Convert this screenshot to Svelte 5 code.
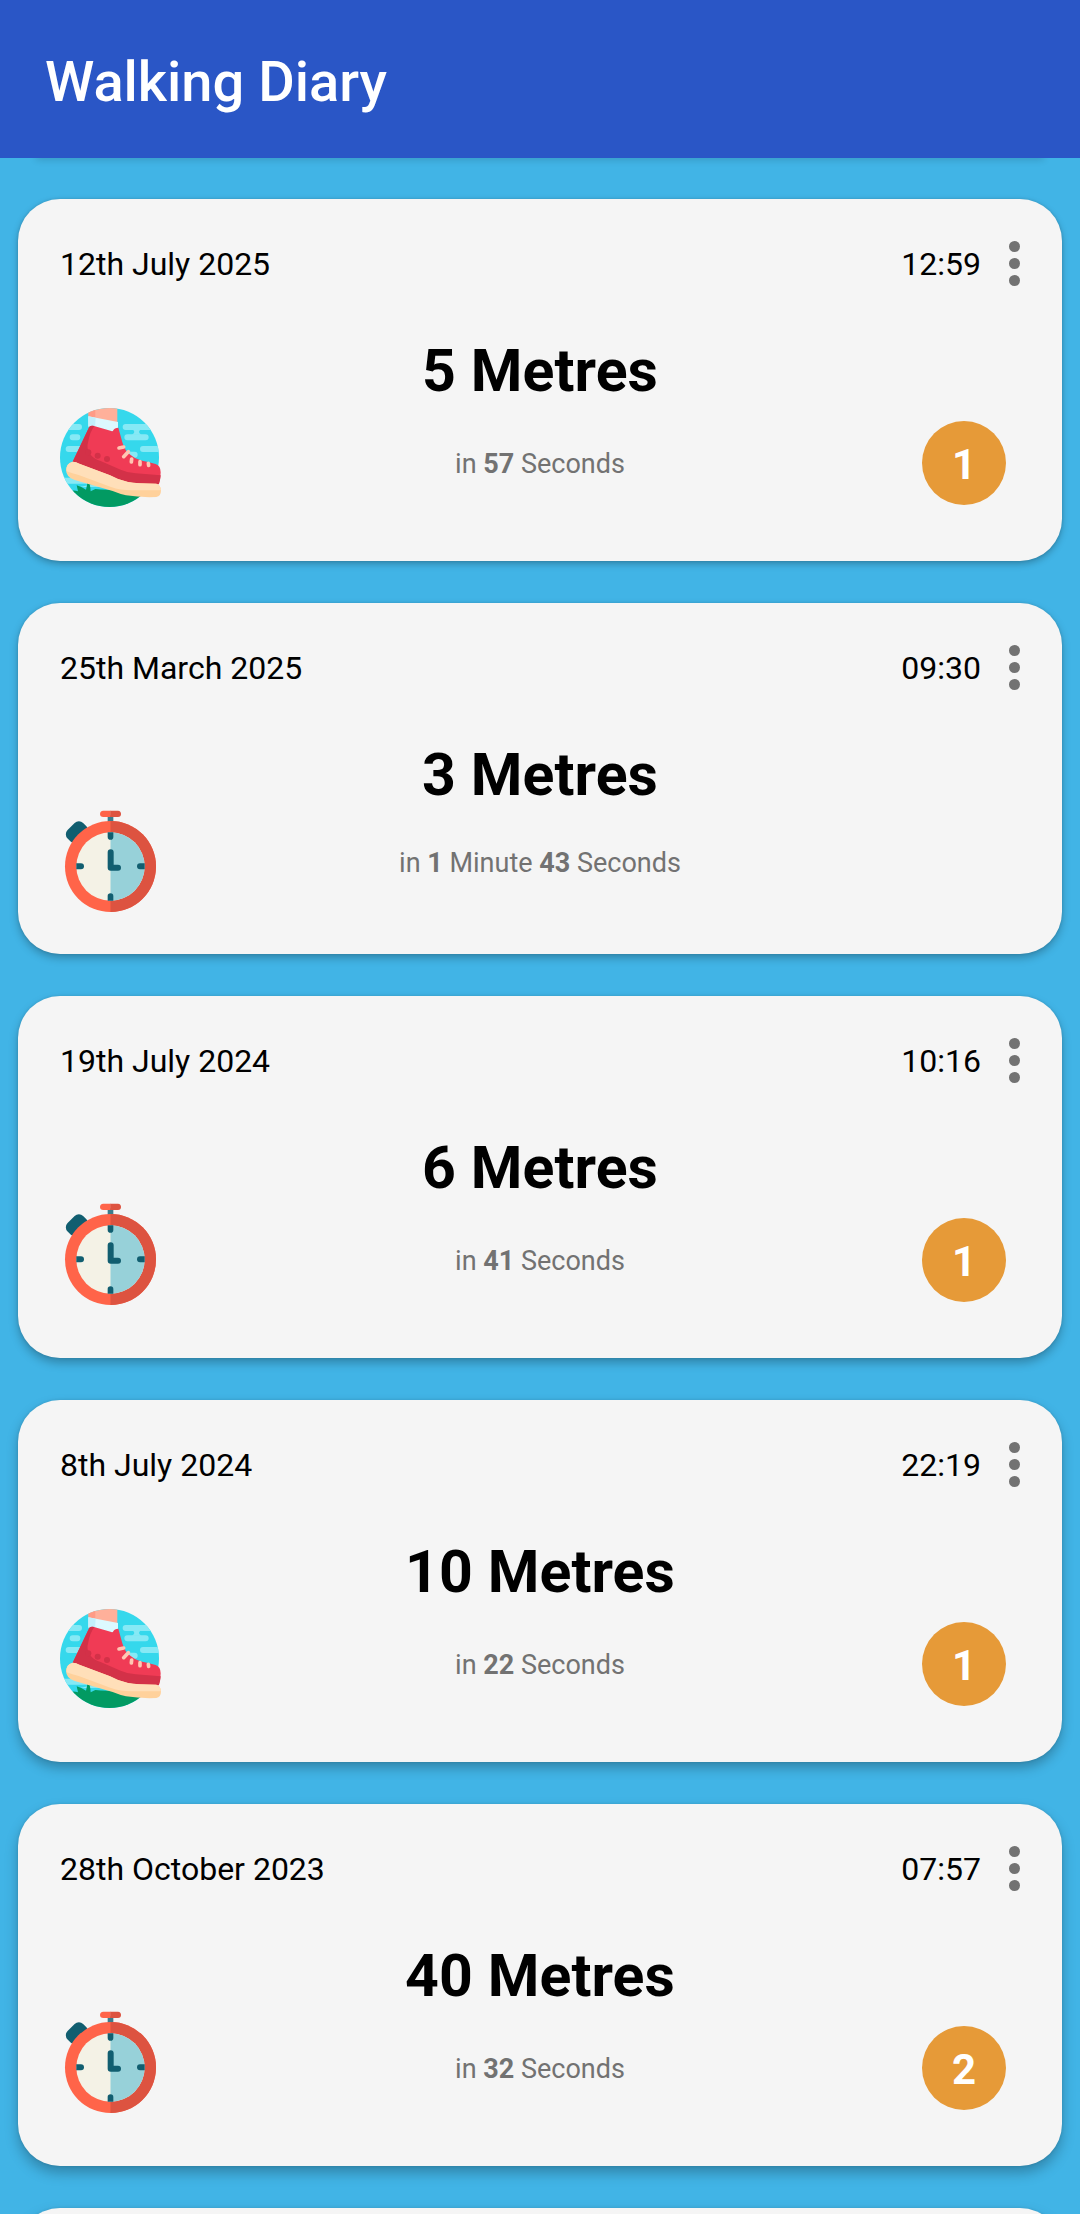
<script>
	const entries = [
		{ date: '12th July 2025', time: '12:59', metres: 5, minutes: 0, seconds: 57, icon: 'shoe', badge: 1 },
		{ date: '25th March 2025', time: '09:30', metres: 3, minutes: 1, seconds: 43, icon: 'watch' },
		{ date: '19th July 2024', time: '10:16', metres: 6, minutes: 0, seconds: 41, icon: 'watch', badge: 1 },
		{ date: '8th July 2024', time: '22:19', metres: 10, minutes: 0, seconds: 22, icon: 'shoe', badge: 1 },
		{ date: '28th October 2023', time: '07:57', metres: 40, minutes: 0, seconds: 32, icon: 'watch', badge: 2 }
	];
</script>

{#snippet shoe()}
	<svg class="icon" viewBox="60 48 312 312">
		<defs>
			<clipPath id="disc"><circle cx="208.500" cy="202.500" r="148.500" /></clipPath>
		</defs>
		<g clip-path="url(#disc)">
			<rect x="60" y="54" width="300" height="300" fill="#35d8ec" />
			<g stroke="#86e9f5" stroke-width="18" stroke-linecap="round">
				<path d="M60 111H117M98 142H112M86 177H120M60 272H150" />
				<path d="M257 111H332M262 142H317M309 177H360M262 194H284" />
			</g>
			<path d="M276 118h28q-14 8 0 16h-28q14-8 0-16z" fill="#86e9f5" />
			<path d="M120 291H200V284H150z" fill="#86e9f5" />
			<path d="M94 302q10-2 20 2l-4-18q14 4 28 13l6-28q7 12 8 33l14-7q20 3 50 2l54 12 54-4v50H90z" fill="#029a62" />
			<path d="M144 50h88v51l-86-20z" fill="#ffb09a" />
			<path d="M144 50h22v38l-20-6z" fill="#ff9b85" />
		</g>
		<path d="M145 79l89 17v20l-14 10-75-16z" fill="#dcf9ff" />
		<path d="M145 79l22 4-2 30-20-5z" fill="#c2f0fb" />
		<path d="M148 110q5-4 14-2l52 15q4 2 6-2 3-8 15-8l12 44q8 28 26 39 18 15 48 19l26 7q15 6 15 25 0 16-5 35-59 5-115-4L98 215z" fill="#f03b55" />
		<path d="M148 110q5-4 15-2-14 20-18 45-7 23 5 38 9 15 32 22l60 26q20 9 45 11l75 6q-1 16-6 27-62 3-116-11L98 215z" fill="#d33148" />
		<circle cx="145" cy="187" r="9" fill="#d33148" />
		<circle cx="173" cy="197" r="9" fill="#d33148" />
		<circle cx="201" cy="207" r="9" fill="#d33148" />
		<path d="M237 174L251 171M251 200L265 185M274 216L275 207M300 224V215M326 226L325 220" stroke="#ffc6b3" stroke-width="11" stroke-linecap="round" />
		<path d="M98 215q10 0 20 6l92 35q24 14 54 20 26 5 85 5 14 5 14 20 0 18-14 20-48 2-91-5-18-4-40-13L104 270q-25-7-26-30 1-20 20-25z" fill="#ffd19b" />
		<path d="M98 215q10 0 20 6l92 35q24 14 54 20 26 5 85 5 14 5 14 20h-88q-34 0-62-10l-97-36q-19-5-36-11-4-24 18-29z" fill="#ffdfb9" />
	</svg>
{/snippet}

{#snippet watch()}
	<svg class="icon" viewBox="60 60 312 312">
		<rect x="-33" y="-25" width="66" height="50" rx="18" transform="translate(111 127) rotate(-45)" fill="#115e70" />
		<rect x="203" y="76" width="17" height="22" fill="#3a7c8c" />
		<path d="M212 62H190q-10 1-10 10t10 9h22z" fill="#ff6449" />
		<path d="M211 62h23q9 1 9 10t-9 9h-23z" fill="#dd5340" />
		<circle cx="211.500" cy="229.500" r="136.500" fill="#ff6449" />
		<path d="M211.500 93a136.500 136.500 0 0 1 0 273z" fill="#dd5340" />
		<circle cx="211.500" cy="229.500" r="102.500" fill="#f4f2e6" />
		<path d="M211.500 127a102.500 102.500 0 0 1 0 205z" fill="#97d1d9" />
		<g fill="#115e70">
			<path d="M203 127h17v14a8.500 8.500 0 0 1-17 0z" />
			<path d="M203 332h17v-14a8.500 8.500 0 0 0-17 0z" />
			<path d="M109 220h14a9 9 0 0 1 0 18h-14z" />
			<path d="M314 220h-14a9 9 0 0 0 0 18h14z" />
		</g>
		<path d="M212 187V233H234" fill="none" stroke="#115e70" stroke-width="18" stroke-linecap="round" stroke-linejoin="round" />
	</svg>
{/snippet}

<div class="screen">
	<header class="bar">
		<h1>Walking Diary</h1>
	</header>

	<main class="list">
		{#each entries as entry, i}
			<article class="card" style="--depth: {i}">
				<div class="top">
					<span class="date">{entry.date}</span>
					<span class="time">{entry.time}</span>
					<button class="more" aria-label="More">
						<i></i><i></i><i></i>
					</button>
				</div>
				<h2>{entry.metres} Metres</h2>
				<div class="bottom" class:with-badge={entry.badge}>
					{#if entry.icon === 'shoe'}
						{@render shoe()}
					{:else}
						{@render watch()}
					{/if}
					<p>
						in
						{#if entry.minutes}<b>{entry.minutes}</b> Minute{/if}
						<b>{entry.seconds}</b> Seconds
					</p>
					{#if entry.badge}
						<span class="badge">{entry.badge}</span>
					{/if}
				</div>
			</article>
		{/each}
		<article class="card"></article>
	</main>
</div>

<style>
	:global(body) {
		margin: 0;
		background: #41b4e6;
	}

	* {
		box-sizing: border-box;
		margin: 0;
		padding: 0;
	}

	.screen {
		height: 2214px;
		overflow: hidden;
		display: flex;
		flex-direction: column;
		background: #41b4e6;
		font-family: Roboto, sans-serif;
		color: #000;
	}

	.bar {
		flex: none;
		height: 158px;
		padding: 5px 45px 0;
		display: flex;
		align-items: center;
		background: #2a56c6;
		box-shadow: 0 38px 7px -36px rgba(0, 0, 0, 0.14);
	}

	h1 {
		font-size: 56px;
		font-weight: 500;
		line-height: 66px;
		color: #fff;
	}

	.list {
		display: flex;
		flex-direction: column;
		gap: 42px;
		padding: 41px 18px 0;
	}

	.card {
		flex: none;
		min-height: 351px;
		padding: 42px 42px 56px;
		border-radius: 42px;
		background: #f5f5f5;
		box-shadow:
			0 calc(3px + var(--depth, 5) * 1px) calc(7px + var(--depth, 5) * 1.5px) rgba(0, 0, 0, 0.26),
			0 0 3px rgba(0, 0, 0, 0.12);
	}

	.top {
		height: 45px;
		display: flex;
		align-items: center;
		font-size: 32px;
		line-height: 43px;
	}

	.date,
	.time {
		padding-top: 2px;
	}

	.date {
		flex: 1;
	}

	.more {
		width: 11px;
		margin-left: 28px;
		display: flex;
		flex-direction: column;
		gap: 6px;
		border: 0;
		background: none;
	}

	.more i {
		width: 11px;
		height: 11px;
		border-radius: 50%;
		background: #727272;
	}

	h2 {
		margin-top: 50px;
		font-size: 59px;
		font-weight: 700;
		line-height: 70px;
		letter-spacing: 0.1px;
		text-align: center;
	}

	.bottom {
		height: 73px;
		margin-top: 15px;
		display: grid;
		grid-template-columns: 104px 1fr 104px;
		grid-template-rows: 100%;
		align-items: center;
	}

	.with-badge {
		height: 84px;
	}

	.icon {
		width: 104px;
		height: 104px;
		margin-top: -15px;
		align-self: start;
	}

	p {
		padding-top: 2px;
		font-size: 27px;
		line-height: 34px;
		color: #727272;
		text-align: center;
	}

	.badge {
		width: 84px;
		height: 84px;
		margin-left: 6px;
		border-radius: 50%;
		background: #e69a38;
		font-size: 42px;
		font-weight: 700;
		line-height: 88px;
		color: #fff;
		text-align: center;
	}
</style>
